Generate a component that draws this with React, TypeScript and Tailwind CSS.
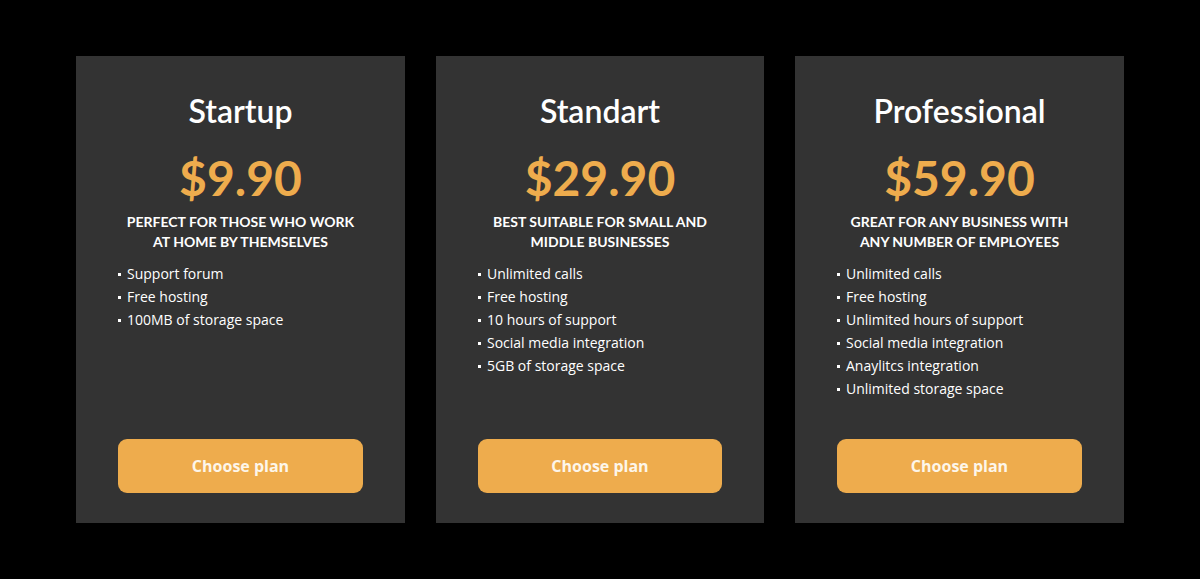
import React from 'react';

type Plan = {
  name: string;
  price: string;
  blurb: [string, string];
  features: string[];
  width: string;
};

const plans: Plan[] = [
  {
    name: 'Startup',
    price: '$9.90',
    blurb: ['Perfect for those who work', 'at home by themselves'],
    features: ['Support forum', 'Free hosting', '100MB of storage space'],
    width: 'w-[329px]',
  },
  {
    name: 'Standart',
    price: '$29.90',
    blurb: ['Best suitable for small and', 'middle businesses'],
    features: ['Unlimited calls', 'Free hosting', '10 hours of support', 'Social media integration', '5GB of storage space'],
    width: 'w-[328px]',
  },
  {
    name: 'Professional',
    price: '$59.90',
    blurb: ['Great for any business with', 'any number of employees'],
    features: [
      'Unlimited calls',
      'Free hosting',
      'Unlimited hours of support',
      'Social media integration',
      'Anaylitcs integration',
      'Unlimited storage space',
    ],
    width: 'w-[329px]',
  },
];

function PlanCard({ plan }: { plan: Plan }) {
  return (
    <div className={`${plan.width} h-[467px] bg-[#333333] flex flex-col px-[42px] pt-[37px] pb-[30px]`}>
      <h2 className="text-center text-white text-[32px] leading-[36px] font-semibold font-['Lato',sans-serif]">
        {plan.name}
      </h2>
      <div className="mt-[22px] text-center text-[#eeac4d] text-[48px] leading-[54px] font-bold font-['Lato',sans-serif]">
        {plan.price}
      </div>
      <p className="mt-[7px] text-center text-white text-[14px] leading-[20px] font-bold uppercase font-['Lato',sans-serif]">
        {plan.blurb[0]}
        <br />
        {plan.blurb[1]}
      </p>
      <ul className="mt-[10px] flex flex-col text-white text-[14px] leading-[23px] font-['Open_Sans',sans-serif]">
        {plan.features.map((f) => (
          <li key={f} className="flex items-center">
            <span className="w-[3px] h-[3px] bg-white mr-[6px] mt-[1px]" />
            {f}
          </li>
        ))}
      </ul>
      <button className="mt-auto w-full h-[54px] rounded-[9px] bg-[#eeac4d] text-[#fdf6ea] text-[16px] font-bold font-['Open_Sans',sans-serif]">
        Choose plan
      </button>
    </div>
  );
}

export default function App() {
  return (
    <div className="w-[1200px] h-[579px] bg-black flex justify-center pt-[56px] gap-[31px]">
      {plans.map((p) => (
        <PlanCard key={p.name} plan={p} />
      ))}
    </div>
  );
}
